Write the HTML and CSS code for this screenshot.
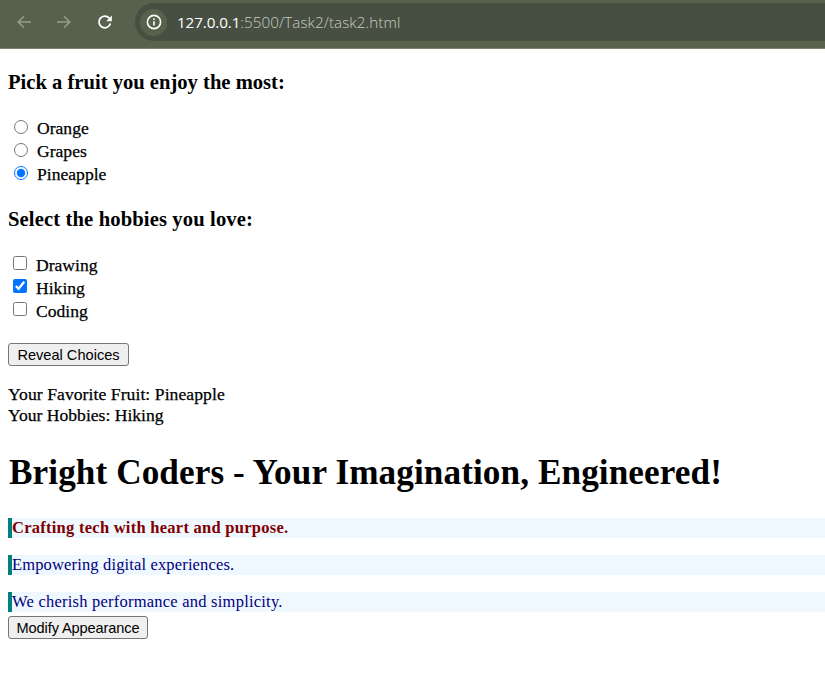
FILE: index.html
```html
<!DOCTYPE html>
<html lang="en">
<head>
<meta charset="utf-8">
<title>Task 2</title>
<link rel="stylesheet" href="styles.css">
</head>
<body>
<header class="toolbar">
  <svg class="nav dim" viewBox="0 0 16 16"><path d="M15 8H2.5M8 2.2L2.2 8L8 13.8"/></svg>
  <svg class="nav dim" viewBox="0 0 16 16"><path d="M1 8H13.5M8 2.2L13.8 8L8 13.8"/></svg>
  <svg class="nav reload" viewBox="0 0 16 16"><path d="M13.4 9.5A5.8 5.8 0 1 1 12.2 4.2L14 6"/><path class="tip" d="M14.8 1.5V7.2H9.2Z"/></svg>
  <div class="address">
    <span class="info"><svg viewBox="0 0 16 16"><circle cx="8" cy="8" r="6.6"/><path d="M8 7.2V11.5M8 4.4V6"/></svg></span>
    <span class="url"><span class="host">127.0.0.1</span><span class="path">:5500/Task2/task2.html</span></span>
  </div>
</header>
<main>
  <h3 class="fruit-title">Pick a fruit you enjoy the most:</h3>
  <div class="options radios">
    <label><input type="radio" name="fruit"><span>Orange</span></label>
    <label><input type="radio" name="fruit"><span>Grapes</span></label>
    <label><input type="radio" name="fruit" checked><span>Pineapple</span></label>
  </div>
  <h3 class="hobby-title">Select the hobbies you love:</h3>
  <div class="options checks">
    <label><input type="checkbox"><span>Drawing</span></label>
    <label><input type="checkbox" checked><span>Hiking</span></label>
    <label><input type="checkbox"><span>Coding</span></label>
  </div>
  <button class="reveal">Reveal Choices</button>
  <div class="result"><span class="fruit-result">Your Favorite Fruit: Pineapple</span><br><span class="hobby-result">Your Hobbies: Hiking</span></div>
  <h1>Bright Coders - Your Imagination, Engineered!</h1>
  <p class="lead"><span>Crafting tech with heart and purpose.</span></p>
  <p class="digital"><span>Empowering digital experiences.</span></p>
  <p class="simple"><span>We cherish performance and simplicity.</span></p>
  <button class="modify">Modify Appearance</button>
</main>
</body>
</html>
```

FILE: styles.css
```css
* { box-sizing: border-box; }
body {
  margin: 0;
  background: #fff;
  color: #000;
  font: 17.6px/21px "Liberation Serif", "Times New Roman", serif;
  white-space: nowrap;
  overflow: hidden;
}
.toolbar {
  display: flex;
  align-items: flex-start;
  height: 49px;
  padding: 3px 0 0 16px;
  background: #56624b;
  border-bottom: 1px solid #7b8472;
}
.nav {
  flex: none;
  width: 16px;
  height: 16px;
  margin: 11px 24px 0 0;
  fill: none;
  stroke: #fff;
  stroke-width: 1.8;
}
.dim { stroke: #98a08f; stroke-width: 1.5; }
.reload { margin: 11px 22px 0 1px; }
.tip { fill: #fff; stroke: none; }
.address {
  display: flex;
  align-items: center;
  flex: 1;
  height: 38px;
  padding-left: 5px;
  background: #474f42;
  border-radius: 19px 0 0 19px;
}
.info {
  display: flex;
  align-items: center;
  justify-content: center;
  width: 27px;
  height: 27px;
  border-radius: 50%;
  background: #56624b;
}
.info svg { width: 16px; height: 16px; fill: none; stroke: #fff; stroke-width: 1.6; }
.url {
  margin-left: 10px;
  font: 300 15.2px/20px "Open Sans", "Noto Sans", sans-serif;
  letter-spacing: 0.07px;
}
.host { color: #fff; font-weight: 400; letter-spacing: -0.08px; }
.path { color: #c8ccc4; }
main { padding: 22px 0 0 8px; }
h3 { margin: 0; font-size: 20.6px; line-height: 23px; }
.options { display: flex; flex-direction: column; margin-top: 23px; }
.options label { display: flex; height: 23px; line-height: 23px; }
.options input { width: 14px; height: 14px; margin: 3px 9px 0 6px; }
.checks input { margin: 2px 9px 0 5px; }
.options span, .result { -webkit-text-stroke: 0.25px #000; }
.hobby-title { margin-top: 22px; letter-spacing: 0.13px; }
button {
  display: block;
  height: 23px;
  padding: 0;
  border: 1px solid #767676;
  border-radius: 3px;
  background: #efefef;
  color: #000;
  font: 14.6px/20px "Liberation Sans", Arial, sans-serif;
}
.reveal { width: 121px; margin-top: 20px; }
.modify { width: 140px; margin-top: 4px; letter-spacing: -0.12px; }
.result { margin-top: 18px; }
.fruit-result { letter-spacing: 0.07px; }
h1 {
  margin: 27px 0 25px;
  padding-left: 1px;
  font-size: 35.2px;
  line-height: 40px;
  letter-spacing: 0.09px;
}
p {
  height: 20px;
  margin: 0 0 17px;
  border-left: 4px solid #008080;
  background: #f0f8ff;
  color: #000080;
  font-size: 16.5px;
  line-height: 20px;
}
.lead { color: #800000; font-weight: bold; letter-spacing: 0.26px; }
.digital { letter-spacing: 0.15px; }
.simple { margin-bottom: 0; letter-spacing: 0.23px; }
```
